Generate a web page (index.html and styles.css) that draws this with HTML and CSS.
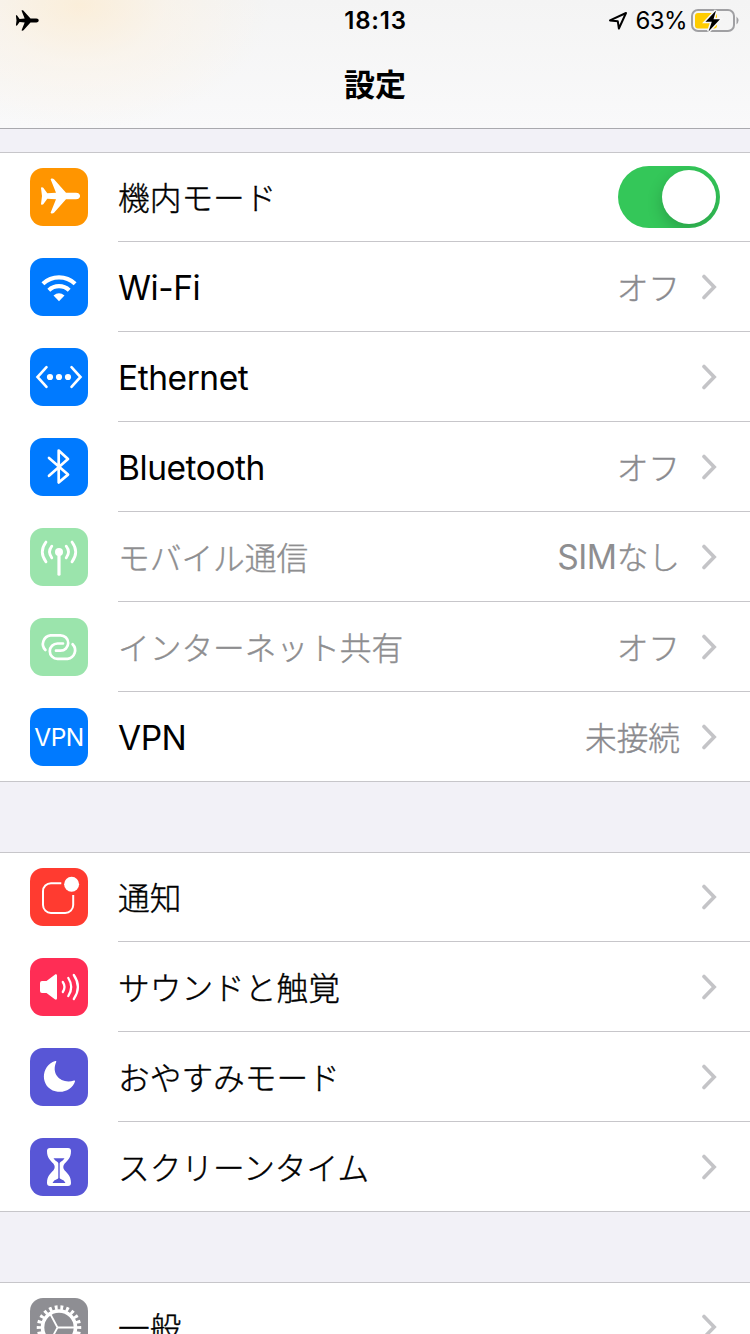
FILE: index.html
```html
<!DOCTYPE html>
<html lang="ja">
<head>
  <meta charset="UTF-8">
  <meta name="viewport" content="width=device-width">
  <title>設定</title>
  <link rel="stylesheet" href="styles.css">
</head>
<body>
<svg class="defs" width="0" height="0">
  <symbol id="plane" viewBox="0 0 40 36">
    <path d="M36 14.700c5.400 0 5.400 6.600 0 6.600H26L14 34.800c-.8.9-3.700.9-3.300-.3L16 21.300l-8.700-.6-4 5.600C2.700 27 1 27 1 26l1-8L1 10c0-1 1.700-1 2.300-.3l4 5.600 8.700-.6-5.300-13.200C10.300.3 13.200.3 14 1.200l12 13.500z"/>
  </symbol>
  <symbol id="chevron" viewBox="0 0 15 26">
    <path d="M2 2.500 12.200 13 2 23.500" fill="none" stroke="#c4c4c7" stroke-width="3.600" stroke-linecap="round"/>
  </symbol>
</svg>

<header class="header">
  <div class="status">
    <svg class="status-plane"><use href="#plane"/></svg>
    <span class="clock">18:13</span>
    <div class="status-right">
      <svg width="20" height="20" viewBox="0 0 20 20"><path d="M2 10.400 18 3 10.900 18.500 9.800 11.300z" fill="none" stroke="#000" stroke-width="2" stroke-linejoin="round"/></svg>
      <span class="percent">63%</span>
      <svg width="50" height="26" viewBox="0 0 50 26">
        <rect x="2" y="3" width="42" height="21" rx="6" fill="none" stroke="#a0a0a3" stroke-width="2"/>
        <path d="M46.500 9.500q4 4 0 8z" fill="#a0a0a3"/>
        <rect x="5" y="6" width="22" height="15.500" rx="3" fill="#fc0"/>
        <path d="M26 3.500 15.500 14.800h6.300L18.500 24.500 30 12.200h-6.500z" stroke="#f8f8f8" stroke-width="3"/>
        <path d="M26 3.500 15.500 14.800h6.300L18.500 24.500 30 12.200h-6.500z"/>
      </svg>
    </div>
  </div>
  <h1 class="title">設定</h1>
</header>

<main>
  <section class="group">
    <div class="row">
      <svg class="icon orange" viewBox="0 0 58 58"><use href="#plane" x="10" y="10" width="40" height="36"/></svg>
      <div class="cell"><span class="label">機内モード</span><span class="toggle"><span class="knob"></span></span></div>
    </div>
    <div class="row">
      <svg class="icon blue" viewBox="0 0 58 58">
        <path d="M12.900 25.800a23.500 23.500 0 0 1 32.200 0M18.800 32.200a15 15 0 0 1 20.400 0" fill="none" stroke="#fff" stroke-width="4.200"/>
        <path d="M29 43.200 23.500 37.500q5.500-4.600 11 0z"/>
      </svg>
      <div class="cell"><span class="label latin">Wi-Fi</span><span class="value">オフ</span><svg class="chevron"><use href="#chevron"/></svg></div>
    </div>
    <div class="row">
      <svg class="icon blue" viewBox="0 0 58 58">
        <path d="M16.500 19.200 7.500 29l9 9.800M41.500 19.200l9 9.800-9 9.800" fill="none" stroke="#fff" stroke-width="2.600" stroke-linecap="round"/>
        <circle cx="20" cy="29" r="3.100"/><circle cx="29" cy="29" r="3.100"/><circle cx="38" cy="29" r="3.100"/>
      </svg>
      <div class="cell"><span class="label latin">Ethernet</span><svg class="chevron"><use href="#chevron"/></svg></div>
    </div>
    <div class="row">
      <svg class="icon blue" viewBox="0 0 58 58">
        <path d="M19 20 38 36.600 28.700 44.500v-32L38 21 19 37.800" fill="none" stroke="#fff" stroke-width="2.700" stroke-linecap="round" stroke-linejoin="round"/>
      </svg>
      <div class="cell"><span class="label latin">Bluetooth</span><span class="value">オフ</span><svg class="chevron"><use href="#chevron"/></svg></div>
    </div>
    <div class="row disabled">
      <svg class="icon green" viewBox="0 0 58 58">
        <circle cx="29" cy="24" r="4"/>
        <path d="M29 24v22.200" stroke="#fff" stroke-width="3.200" stroke-linecap="round"/>
        <path d="M21.800 18.200q-4.600 5.800 0 11.600M36.200 18.200q4.600 5.800 0 11.600M16 14q-7.400 9.900 0 19.800M42 14q7.400 9.900 0 19.800" fill="none" stroke="#fff" stroke-width="2.800" stroke-linecap="round"/>
      </svg>
      <div class="cell"><span class="label">モバイル通信</span><span class="value"><span class="latin">SIM</span>なし</span><svg class="chevron"><use href="#chevron"/></svg></div>
    </div>
    <div class="row disabled">
      <svg class="icon green" viewBox="0 0 58 58">
        <path d="M15.400 32A8.700 8.700 0 0 1 20.500 17.300H30.500a7.700 7.700 0 0 1 0 15.400H26M42.600 26.200A8.700 8.700 0 0 1 37.500 40.900H27.500a7.700 7.700 0 0 1 0-15.400H33" fill="none" stroke="#fff" stroke-width="2.700" stroke-linecap="round"/>
      </svg>
      <div class="cell"><span class="label">インターネット共有</span><span class="value">オフ</span><svg class="chevron"><use href="#chevron"/></svg></div>
    </div>
    <div class="row">
      <span class="icon blue vpn">VPN</span>
      <div class="cell"><span class="label latin">VPN</span><span class="value">未接続</span><svg class="chevron"><use href="#chevron"/></svg></div>
    </div>
  </section>

  <section class="group">
    <div class="row">
      <svg class="icon red" viewBox="0 0 58 58">
        <path d="M31.300 15.200H21a8 8 0 0 0-8 8V37a8 8 0 0 0 8 8h14.200a8 8 0 0 0 8-8V27" fill="none" stroke="#fff" stroke-width="2"/>
        <circle cx="41.600" cy="16.300" r="7.500"/>
      </svg>
      <div class="cell"><span class="label">通知</span><svg class="chevron"><use href="#chevron"/></svg></div>
    </div>
    <div class="row">
      <svg class="icon pink" viewBox="0 0 58 58">
        <path d="M12 23h4.500l8.300-6.200c1.300-.9 2.200-.4 2.200 1v22.400c0 1.400-.9 1.900-2.200 1L16.500 35H12q-2 0-2-2v-8q0-2 2-2z"/>
        <path d="M32.800 24q3.400 5 0 10M38.300 20q5.800 9 0 18M43.800 17q8.200 12 0 24" fill="none" stroke="#fff" stroke-width="2.300" stroke-linecap="round"/>
      </svg>
      <div class="cell"><span class="label">サウンドと触覚</span><svg class="chevron"><use href="#chevron"/></svg></div>
    </div>
    <div class="row">
      <svg class="icon purple" viewBox="0 0 58 58">
        <path d="M25.300 13C10 18 10.200 39.500 25.500 43.300 34 45.500 42.500 41 45 33.500c.2-.8-.3-1.200-1-1C32 36.500 20.500 27 26.200 14c.3-.8-.1-1.200-.9-1z"/>
      </svg>
      <div class="cell"><span class="label">おやすみモード</span><svg class="chevron"><use href="#chevron"/></svg></div>
    </div>
    <div class="row">
      <svg class="icon purple" viewBox="0 0 58 58">
        <path d="M20 10h18q3 0 3 3c0 7-3.500 9.500-6.300 12.500-1.900 2.200-1.900 4.800 0 7C37.500 35.500 41 38 41 45q0 3-3 3H20q-3 0-3-3c0-7 3.500-9.500 6.300-12.500 1.900-2.200 1.900-4.800 0-7C20.500 22.500 17 20 17 13q0-3 3-3z"/>
        <path d="M23.500 20.200h11q-1 2-4 3.800-.8.600-.8 1.500v14.300q0 .9 1 1.300 3.700 1.200 4.800 3.900h-13q1.100-2.700 4.800-3.900 1-.4 1-1.300V25.500q0-.9-.8-1.500-3-1.800-4-3.800z" fill="#5856d6"/>
      </svg>
      <div class="cell"><span class="label">スクリーンタイム</span><svg class="chevron"><use href="#chevron"/></svg></div>
    </div>
  </section>

  <section class="group">
    <div class="row">
      <svg class="icon gray" viewBox="0 0 58 58">
        <g fill="none" stroke="#fff">
          <circle cx="29" cy="29.500" r="16.500" stroke-width="3.600"/>
          <circle cx="29" cy="29.500" r="20" stroke-width="4.500" pathLength="88" stroke-dasharray="2 2" stroke-dashoffset="1"/>
          <path d="M27.500 29.500H45M27.500 29.500l-7.200-13.500M27.500 29.500l-7.200 13.500" stroke-width="1.800"/>
        </g>
      </svg>
      <div class="cell"><span class="label">一般</span><svg class="chevron"><use href="#chevron"/></svg></div>
    </div>
  </section>
</main>
</body>
</html>
```
FILE: styles.css
```css
* { box-sizing: border-box; }

html { height: 100%; overflow: hidden; }

body {
  margin: 0;
  height: 100%;
  overflow: hidden;
  background: #f2f1f7;
  color: #000;
  font-family: "Noto Sans CJK JP", sans-serif;
}

.defs { display: block; }

.header {
  height: 129px;
  border-bottom: 1px solid #a9a9ae;
  background:
    radial-gradient(ellipse 190px 125px at 80px 5px, rgba(255, 234, 200, .6), rgba(255, 240, 218, .35) 45%, rgba(250, 246, 238, 0)),
    linear-gradient(#f4f4f4, #f9f9fa);
}

.status {
  display: grid;
  grid-template-columns: 1fr auto 1fr;
  align-items: center;
  height: 40px;
  padding: 0 10px 0 15px;
  font-family: Inter, sans-serif;
  font-size: 24px;
}

.status-plane { width: 24px; height: 21px; }
.clock { font-weight: 600; letter-spacing: .8px; margin-left: -4px; }
.status-right { display: flex; align-items: center; justify-content: flex-end; }
.percent { margin: 0 3px 0 8px; letter-spacing: -.6px; }

.title {
  margin: 0;
  height: 88px;
  line-height: 86px;
  text-align: center;
  font-size: 31px;
  font-weight: 700;
}

.group {
  margin-top: 23px;
  background: #fff;
  box-shadow: inset 0 1px #c7c6ca, inset 0 -1px #c7c6ca;
}

.group + .group { margin-top: 70px; }

.row {
  display: flex;
  align-items: center;
  gap: 30px;
  height: 90px;
  padding-left: 30px;
}

.cell {
  flex: 1;
  display: flex;
  align-items: center;
  height: 90px;
  padding-right: 33px;
  border-bottom: 1px solid #c7c6ca;
}

.row:last-child .cell { border-bottom-color: transparent; }

.label, .value {
  font-size: 31.7px;
  font-weight: 300;
  line-height: 86px;
  padding-bottom: 2px;
  -webkit-text-stroke: .4px;
}

.label { flex: 1; }
.value { color: #8a8a8e; margin-right: 22px; }

.latin {
  font-family: Inter, sans-serif;
  font-size: 33.5px;
  font-weight: 400;
  letter-spacing: -.45px;
  -webkit-text-stroke: 0;
}

.label.latin { padding: 2px 0 0; }
.disabled .label, .disabled .value { color: #8e8e90; }

.chevron { width: 15px; height: 26px; }

.icon {
  width: 58px;
  height: 58px;
  border-radius: 13px;
  fill: #fff;
}

.orange { background: #ff9500; }
.blue { background: #007aff; }
.green { background: #9be4ac; }
.red { background: #ff3b30; }
.pink { background: #ff2d55; }
.purple { background: #5856d6; }
.gray { background: #8e8e93; }

.vpn {
  color: #fff;
  font: 400 24.5px/59px Inter, sans-serif;
  letter-spacing: -.5px;
  text-align: center;
}

.toggle {
  display: flex;
  justify-content: flex-end;
  width: 102px;
  height: 62px;
  margin-right: -3px;
  padding: 4px;
  border-radius: 31px;
  background: #34c759;
  overflow: hidden;
}

.knob {
  width: 54px;
  height: 54px;
  border-radius: 50%;
  background: #fff;
  box-shadow: 0 6px 16px rgba(0, 0, 0, .2);
}
```
